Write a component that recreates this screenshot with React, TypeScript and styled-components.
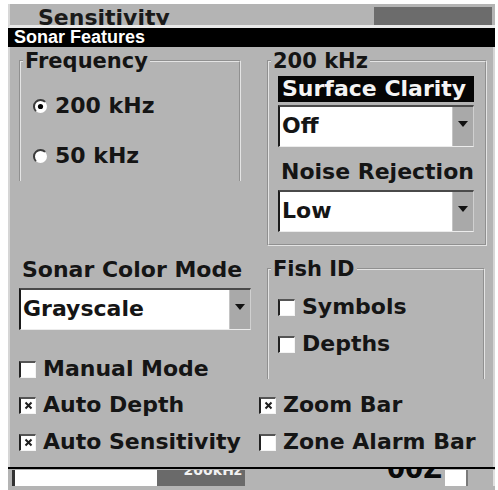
import React from 'react';
import styled, { createGlobalStyle } from 'styled-components';

const panelGray = '#b4b4b4';
const font = '"DejaVu Sans", Verdana, sans-serif';

const GlobalStyle = createGlobalStyle`
  html, body {
    margin: 0;
    padding: 0;
    background: #fff;
  }
  body {
    font-family: ${font};
  }
`;

const Screen = styled.div`
  width: 498px;
  height: 490px;
  box-sizing: border-box;
  padding: 4px 3px 0 8px;
  background: #fff;
  overflow: hidden;
  color: #111;
`;

const TopStrip = styled.div`
  height: 24px;
  box-sizing: border-box;
  display: flex;
  background: ${panelGray};
  border-left: 2px solid #d8d8d8;
  border-bottom: 3px solid #e9e9e9;
  overflow: hidden;
`;

const HiddenCaption = styled.span`
  padding: 2px 0 0 28px;
  font: bold 22px/24px ${font};
  color: #1a1a1a;
`;

const DarkBlock = styled.div`
  margin: 3px 3px 0 auto;
  width: 118px;
  height: 18px;
  background: #6c6c6c;
`;

const TitleBar = styled.div`
  height: 19px;
  padding-left: 6px;
  background: #000;
  color: #fff;
  font: bold 18px/19px "Liberation Sans", Arial, sans-serif;
  letter-spacing: 0;
`;

const Panel = styled.div`
  height: 420px;
  box-sizing: border-box;
  padding: 3px 6px 0 9px;
  background: ${panelGray};
  border-left: 2px solid #d6d6d6;
  border-right: 2px solid #d6d6d6;
`;

const TopGrid = styled.div`
  display: grid;
  grid-template-columns: 232px 220px;
  column-gap: 16px;
  align-items: start;
`;

const Column = styled.div`
  display: flex;
  flex-direction: column;
`;

const Group = styled.fieldset<{ $open?: boolean }>`
  margin: 0;
  padding: 0;
  min-width: 0;
  border: 2px groove #e4e4e4;
  border-bottom: ${(p) => (p.$open ? 'none' : '2px groove #e4e4e4')};
`;

const Legend = styled.legend`
  margin-left: 2px;
  padding: 0 2px;
  font: bold 21px/22px ${font};
  color: #141414;
`;

const FrequencyGroup = styled(Group)`
  width: 222px;
  box-sizing: border-box;
`;

const RadioList = styled.div`
  display: flex;
  flex-direction: column;
  gap: 22px;
  padding: 20px 0 11px 12px;
`;

const OptionRow = styled.label<{ $height?: number }>`
  display: flex;
  align-items: center;
  gap: 7px;
  height: ${(p) => p.$height ?? 24}px;
  font: bold 22px/24px ${font};
  color: #151515;
  white-space: nowrap;
`;

const FilterBody = styled.div`
  display: flex;
  flex-direction: column;
  padding: 4px 11px 12px 9px;
`;

const InvertedLabel = styled.div`
  height: 26px;
  padding-left: 4px;
  background: #050505;
  color: #f4f4f4;
  font: bold 22px/26px ${font};
  white-space: nowrap;
`;

const FieldLabel = styled.div<{ $gap: number }>`
  margin-top: ${(p) => p.$gap}px;
  padding-left: 3px;
  height: 24px;
  font: bold 22px/24px ${font};
  color: #151515;
  white-space: nowrap;
`;

const Select = styled.div<{ $gap: number }>`
  margin-top: ${(p) => p.$gap}px;
  height: 42px;
  box-sizing: border-box;
  display: flex;
  background: #fff;
  border-top: 2px solid #4a4a4a;
  border-left: 2px solid #1c1c1c;
  border-bottom: 1px solid #ececec;
  border-right: 1px solid #d0d0d0;
`;

const SelectValue = styled.span`
  flex: 1;
  padding-left: 2px;
  font: bold 22px/37px ${font};
  color: #151515;
`;

const SelectButton = styled.span`
  width: 20px;
  display: flex;
  align-items: center;
  justify-content: center;
  padding-bottom: 5px;
  background: #a9a9a9;
  border-left: 1px solid #c4c4c4;
`;

const FishGroup = styled(Group)`
  margin: 12px 2px 0 0;
`;

const CheckList = styled.div`
  display: flex;
  flex-direction: column;
  gap: 13px;
  padding: 15px 0 23px 9px;
`;

const BottomGrid = styled.div`
  display: grid;
  grid-template-columns: 240px 228px;
  row-gap: 13px;
  margin-top: 12px;
`;

const ManualRow = styled.div`
  margin-top: 27px;
`;

const Box = styled.span`
  width: 17px;
  height: 17px;
  box-sizing: border-box;
  flex: none;
  display: flex;
  align-items: center;
  justify-content: center;
  background: #fff;
  border-top: 2px solid #555;
  border-left: 2px solid #222;
  border-right: 1px solid #f4f4f4;
  border-bottom: 1px solid #f4f4f4;
`;

const BottomStrip = styled.div`
  height: 23px;
  box-sizing: border-box;
  display: flex;
  align-items: flex-start;
  background: ${panelGray};
  border-top: 2px solid #000;
  overflow: hidden;
`;

const StatusField = styled.div`
  margin: 1px 0 0 4px;
  width: 142px;
  height: 16px;
  background: #fff;
  border-left: 3px solid #333;
`;

const DarkReadout = styled.div`
  width: 88px;
  height: 16px;
  margin-top: 1px;
  background: #6a6a6a;
  overflow: hidden;
  text-align: right;
`;

const ClippedText = styled.span<{ $size: number; $lift: number; $color: string }>`
  display: block;
  margin-top: -${(p) => p.$lift}px;
  padding-right: 3px;
  font: bold ${(p) => p.$size}px/${(p) => p.$size + 2}px ${font};
  color: ${(p) => p.$color};
  white-space: nowrap;
`;

const ClockReadout = styled.div`
  margin-left: auto;
  height: 18px;
  overflow: hidden;
`;

const WhiteCell = styled.div`
  margin-top: 1px;
  width: 21px;
  height: 16px;
  background: #fff;
  border-right: 2px solid #7a7a7a;
`;

const EdgeCell = styled.div`
  width: 25px;
  height: 16px;
  margin-top: 1px;
  border-right: 2px solid #e0e0e0;
`;

const Radio = ({ on }: { on?: boolean }) => (
  <svg width="15" height="15" viewBox="0 0 15 15">
    <circle cx="7.5" cy="7.5" r="6.5" fill="#fff" />
    <path d="M2.9 12.1 A6.5 6.5 0 0 1 12.1 2.9" stroke="#3a3a3a" strokeWidth="2" fill="none" />
    {on && <circle cx="7.5" cy="7.5" r="2.6" fill="#000" />}
  </svg>
);

const Check = ({ label, on }: { label: string; on?: boolean }) => (
  <OptionRow>
    <Box>
      {on && (
        <svg width="9" height="9" viewBox="0 0 9 9">
          <path d="M1.5 1.5 L7.5 7.5 M7.5 1.5 L1.5 7.5" stroke="#1e1e1e" strokeWidth="2" />
        </svg>
      )}
    </Box>
    {label}
  </OptionRow>
);

const Dropdown = ({ value, gap }: { value: string; gap: number }) => (
  <Select $gap={gap}>
    <SelectValue>{value}</SelectValue>
    <SelectButton>
      <svg width="10" height="6" viewBox="0 0 10 6">
        <polygon points="0,0 10,0 5,6" fill="#111" />
      </svg>
    </SelectButton>
  </Select>
);

export default function App() {
  return (
    <>
      <GlobalStyle />
      <Screen>
        <TopStrip>
          <HiddenCaption>Sensitivity</HiddenCaption>
          <DarkBlock />
        </TopStrip>
        <TitleBar>Sonar Features</TitleBar>
        <Panel>
          <TopGrid>
            <Column>
              <FrequencyGroup $open>
                <Legend>Frequency</Legend>
                <RadioList>
                  <OptionRow $height={28}>
                    <Radio on />
                    200 kHz
                  </OptionRow>
                  <OptionRow $height={28}>
                    <Radio />
                    50 kHz
                  </OptionRow>
                </RadioList>
              </FrequencyGroup>
              <FieldLabel $gap={77}>Sonar Color Mode</FieldLabel>
              <Dropdown value="Grayscale" gap={6} />
              <ManualRow>
                <Check label="Manual Mode" />
              </ManualRow>
            </Column>
            <Column>
              <Group>
                <Legend>200 kHz</Legend>
                <FilterBody>
                  <InvertedLabel>Surface Clarity</InvertedLabel>
                  <Dropdown value="Off" gap={3} />
                  <FieldLabel $gap={13}>Noise Rejection</FieldLabel>
                  <Dropdown value="Low" gap={6} />
                </FilterBody>
              </Group>
              <FishGroup $open>
                <Legend>Fish ID</Legend>
                <CheckList>
                  <Check label="Symbols" />
                  <Check label="Depths" />
                </CheckList>
              </FishGroup>
            </Column>
          </TopGrid>
          <BottomGrid>
            <Check label="Auto Depth" on />
            <Check label="Zoom Bar" on />
            <Check label="Auto Sensitivity" on />
            <Check label="Zone Alarm Bar" />
          </BottomGrid>
        </Panel>
        <BottomStrip>
          <StatusField />
          <DarkReadout>
            <ClippedText $size={14} $lift={8} $color="#f2f2f2">200kHz</ClippedText>
          </DarkReadout>
          <ClockReadout>
            <ClippedText $size={26} $lift={14} $color="#0a0a0a">00Z</ClippedText>
          </ClockReadout>
          <WhiteCell />
          <EdgeCell />
        </BottomStrip>
      </Screen>
    </>
  );
}
